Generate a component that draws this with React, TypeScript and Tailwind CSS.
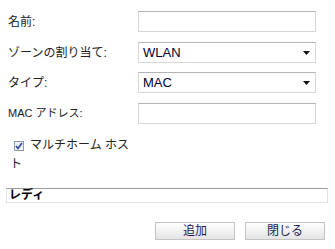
import React from 'react';

const font = { fontFamily: '"Liberation Sans", "Noto Sans CJK JP", sans-serif' };

const Label: React.FC<{ children: React.ReactNode; small?: boolean }> = ({ children, small }) => (
  <div className={`w-[138px] pl-[8px] ${small ? 'text-[11px]' : 'text-[12px]'} text-[#222]`}>{children}</div>
);

const TextBox = () => (
  <div className="w-[178px] h-[21px] border border-[#d6d6d6] border-t-[#b4b4b4] bg-white" />
);

const Select: React.FC<{ value: string }> = ({ value }) => (
  <div className="w-[178px] h-[21px] border border-[#d6d6d6] border-t-[#b4b4b4] bg-white flex items-center justify-between pl-[4px] pr-[5px]">
    <span className="text-[13px] text-[#000033] leading-none">{value}</span>
    <svg width="7" height="4" viewBox="0 0 7 4"><path d="M0 0h7L3.5 4z" fill="#111" /></svg>
  </div>
);

function App() {
  return (
    <div className="w-[335px] h-[249px] bg-white relative" style={font}>
      <div className="flex flex-col pt-[11px]">
        <div className="flex items-center h-[21px]">
          <Label>名前:</Label>
          <TextBox />
        </div>
        <div className="flex items-center h-[21px] mt-[10px]">
          <Label>ゾーンの割り当て:</Label>
          <Select value="WLAN" />
        </div>
        <div className="flex items-center h-[21px] mt-[9px]">
          <Label>タイプ:</Label>
          <Select value="MAC" />
        </div>
        <div className="flex items-center h-[21px] mt-[10px]">
          <Label small>MAC アドレス:</Label>
          <TextBox />
        </div>
        <div className="w-[130px] mt-[12px] pl-[10px] text-[12px] leading-[18px] text-[#222]">
          <span className="inline-block w-[14px] pl-[4px] align-middle">
            <span className="inline-flex w-[10px] h-[10px] border border-[#8a9ab0] bg-[#eef2f8] items-center justify-center align-middle relative -top-[1px]">
              <svg width="8" height="8" viewBox="0 0 8 8"><path d="M1 4l2 2.5L7 1" stroke="#2a4aa0" strokeWidth="1.6" fill="none" /></svg>
            </span>
          </span>
          <span className="ml-[6px]">マルチホーム ホスト</span>
        </div>
        <div className="mt-[15px] ml-[6px] w-[322px] h-[15px] border border-[#e2e2e2] border-t-[#9a9a9a] flex items-center pl-[2px]">
          <span className="text-[12px] font-bold text-black leading-none">レディ</span>
        </div>
        <div className="flex justify-end gap-[10px] pr-[10px] mt-[19px]">
          <button className="w-[80px] h-[18px] border border-[#c4c4c4] bg-gradient-to-b from-white to-[#e4e4e4] text-[12px] text-[#1a1a55] leading-none">追加</button>
          <button className="w-[80px] h-[18px] border border-[#c4c4c4] bg-gradient-to-b from-white to-[#e4e4e4] text-[12px] text-[#1a1a55] leading-none">閉じる</button>
        </div>
      </div>
    </div>
  );
}

export default App;
